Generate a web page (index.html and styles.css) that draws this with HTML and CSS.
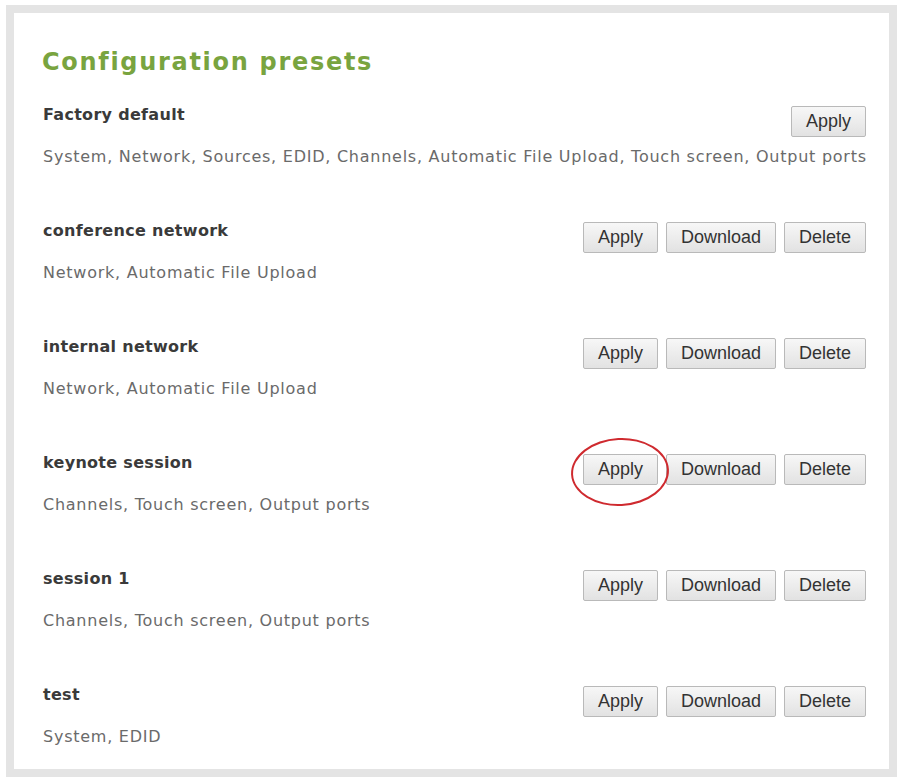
FILE: index.html
```html
<!DOCTYPE html>
<html lang="en">
<head>
    <meta charset="UTF-8">
    <meta name="viewport" content="width=device-width, initial-scale=1.0">
    <title>Configuration presets</title>
    <link rel="stylesheet" href="styles.css">
</head>
<body>
    <div class="frame">
        <h1>Configuration presets</h1>

        <div class="preset">
            <div class="preset-head">
                <span class="preset-name">Factory default</span>
                <div class="actions">
                    <button>Apply</button>
                </div>
            </div>
            <div class="preset-desc">System, Network, Sources, EDID, Channels, Automatic File Upload, Touch screen, Output ports</div>
        </div>

        <div class="preset">
            <div class="preset-head">
                <span class="preset-name">conference network</span>
                <div class="actions">
                    <button>Apply</button>
                    <button>Download</button>
                    <button>Delete</button>
                </div>
            </div>
            <div class="preset-desc">Network, Automatic File Upload</div>
        </div>

        <div class="preset">
            <div class="preset-head">
                <span class="preset-name">internal network</span>
                <div class="actions">
                    <button>Apply</button>
                    <button>Download</button>
                    <button>Delete</button>
                </div>
            </div>
            <div class="preset-desc">Network, Automatic File Upload</div>
        </div>

        <div class="preset">
            <div class="preset-head">
                <span class="preset-name">keynote session</span>
                <div class="actions">
                    <span class="marked">
                        <button>Apply</button>
                        <span class="circle"></span>
                    </span>
                    <button>Download</button>
                    <button>Delete</button>
                </div>
            </div>
            <div class="preset-desc">Channels, Touch screen, Output ports</div>
        </div>

        <div class="preset">
            <div class="preset-head">
                <span class="preset-name">session 1</span>
                <div class="actions">
                    <button>Apply</button>
                    <button>Download</button>
                    <button>Delete</button>
                </div>
            </div>
            <div class="preset-desc">Channels, Touch screen, Output ports</div>
        </div>

        <div class="preset">
            <div class="preset-head">
                <span class="preset-name">test</span>
                <div class="actions">
                    <button>Apply</button>
                    <button>Download</button>
                    <button>Delete</button>
                </div>
            </div>
            <div class="preset-desc">System, EDID</div>
        </div>
    </div>
</body>
</html>
```

FILE: styles.css
```css
body {
    margin: 5px 6px 4px 6px;
    background-color: #fff;
    font-family: "DejaVu Sans", Verdana, sans-serif;
}
.frame {
    border: 8px solid #e4e4e4;
    padding: 33px 23px 22px 29px;
    background-color: #fff;
}
h1 {
    margin: 0 0 27px -1px;
    font-size: 24px;
    line-height: 32px;
    font-weight: bold;
    letter-spacing: 1.7px;
    color: #79a43f;
}
.preset {
    margin-bottom: 54px;
}
.preset:last-child {
    margin-bottom: 0;
}
.preset-head {
    display: flex;
    justify-content: space-between;
    align-items: flex-start;
    height: 32px;
}
.preset-name {
    font-size: 16px;
    line-height: 20px;
    font-weight: bold;
    letter-spacing: 0.3px;
    color: #3a3a3a;
}
.preset-desc {
    margin-top: 10px;
    font-size: 16px;
    line-height: 20px;
    letter-spacing: 0.75px;
    white-space: nowrap;
    color: #6a6a6a;
}
.actions {
    display: flex;
    gap: 8px;
    margin-top: 1px;
}
button {
    height: 31px;
    padding: 0 14px;
    border: 1px solid #b9b9b9;
    border-radius: 2px;
    background: linear-gradient(#f7f7f7, #e2e2e2);
    font-family: "Liberation Sans", Arial, sans-serif;
    font-size: 18px;
    color: #333;
}
.marked {
    position: relative;
    display: inline-block;
}
.circle {
    position: absolute;
    left: -12px;
    top: -16px;
    width: 94px;
    height: 64px;
    border: 2px solid #cf2a2f;
    border-radius: 50%;
    transform: rotate(-3deg);
}
```
